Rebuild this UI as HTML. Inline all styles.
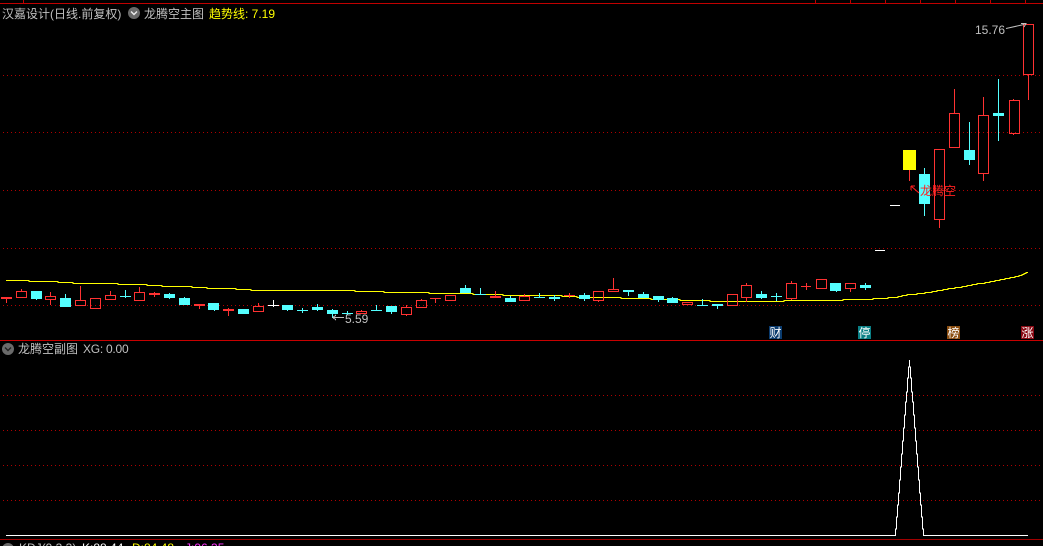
<!DOCTYPE html>
<html><head><meta charset="utf-8"><style>
html,body{margin:0;padding:0;background:#000;width:1043px;height:546px;overflow:hidden}
#w{position:relative;width:1043px;height:546px;overflow:hidden;background:#000}
svg{display:block;position:absolute;left:0;top:0}
.t{position:absolute;white-space:nowrap;font-family:"WenQuanYi Zen Hei","Liberation Sans","Noto Sans CJK SC",sans-serif;font-size:12px;line-height:14px;height:14px;color:#c0c0c0}
</style></head><body><div id="w">
<svg width="1043" height="546" viewBox="0 0 1043 546">
<defs>
<pattern id="d" x="3" y="0" width="4" height="1" patternUnits="userSpaceOnUse"><rect width="1" height="1" fill="#b00000"/></pattern>
</defs>
<g shape-rendering="crispEdges">
<path d="M0 3.5H1043M23.5 0V3M815.5 0V3M850.5 0V3M885.5 0V3M920.5 0V3M955.5 0V3M990.5 0V3M1025.5 0V3" stroke="#c00000" fill="none"/>
<path d="M0 340.5H1043" stroke="#c80000"/>
<path d="M0 539.5H1043" stroke="#a00000"/>
<g fill="url(#d)">
<rect x="3" y="75" width="1040" height="1"/><rect x="3" y="132" width="1040" height="1"/><rect x="3" y="190" width="1040" height="1"/><rect x="3" y="248" width="1040" height="1"/><rect x="3" y="305" width="1040" height="1"/>
<rect x="0" y="395" width="1043" height="1"/><rect x="0" y="430" width="1043" height="1"/><rect x="0" y="465" width="1043" height="1"/><rect x="0" y="500" width="1043" height="1"/>
</g>

<!-- yellow MA -->
<path d="M6 280.5H29V281.5H58V282.5H73V283.5H118V284.5H147V285.5H162V286.5H192V287.5H207V288.5H236V289.5H251V290.5H355V291.5H384V292.5H429V293.5H473V294.5H503V295.5H562V296.5H577V297.5H621V298.5H651V299.5H680V300.5H710V301.5H784V300.5H843V299.5H873V298.5H888V297.5H898V296.5H902V295.5H907V294.5H917V293.5H925V292.5H932V291.5H937V290.5H943V289.5H948V288.5H955V287.5H962V286.5H967V285.5H972V284.5H977V283.5H985V282.5H990V281.5H995V280.5H1000V279.5H1005V278.5H1010V277.5H1015V276.5H1019V275.5H1022V274.5H1024V273.5H1026V272.5H1028" stroke="#ffff00" fill="none"/>

<!-- red boxes -->
<g fill="none" stroke="#ff3232">
<rect x="16.5" y="291.5" width="10" height="6"/><rect x="45.5" y="296.5" width="10" height="3"/><rect x="75.5" y="300.5" width="10" height="5"/><rect x="90.5" y="298.5" width="10" height="10"/><rect x="105.5" y="295.5" width="10" height="4"/><rect x="134.5" y="292.5" width="10" height="8"/><rect x="253.5" y="306.5" width="10" height="5"/><rect x="356.5" y="311.5" width="10" height="2"/><rect x="401.5" y="307.5" width="10" height="7"/><rect x="416.5" y="300.5" width="10" height="7"/><rect x="445.5" y="295.5" width="10" height="5"/><rect x="519.5" y="296.5" width="10" height="4"/><rect x="593.5" y="291.5" width="10" height="9"/><rect x="608.5" y="289.5" width="10" height="2"/><rect x="682.5" y="302.5" width="10" height="2"/><rect x="727.5" y="294.5" width="10" height="11"/><rect x="741.5" y="285.5" width="10" height="12"/><rect x="786.5" y="283.5" width="10" height="15"/><rect x="816.5" y="279.5" width="10" height="9"/><rect x="845.5" y="283.5" width="10" height="5"/><rect x="934.5" y="149.5" width="10" height="70"/><rect x="949.5" y="113.5" width="10" height="34"/><rect x="978.5" y="115.5" width="10" height="58"/><rect x="1009.5" y="100.5" width="10" height="33"/><rect x="1023.5" y="24.5" width="10" height="50"/>
<path d="M6.5 299V303M21.5 289V291M50.5 292V296M50.5 300V305M80.5 286V300M95.5 308V309M110.5 291V295M139.5 287V292M154.5 292V297M199.5 305V309M228.5 308V316M258.5 303V306M361.5 310V311M406.5 305V307M406.5 315V316M421.5 299V300M435.5 298V303M495.5 291V298M598.5 300V302M613.5 278V289M524.5 294V296M569.5 293V298M732.5 305V306M746.5 283V285M746.5 297V302M791.5 281V283M791.5 298V300M806.5 283V290M821.5 288V289M850.5 288V292M909.5 170V181M939.5 219V228M954.5 89V113M954.5 147V148M983.5 97V115M983.5 173V181M1013.5 99V100M1013.5 133V135M1028.5 74V100M430 298.5H441M801 286.5H811"/>
</g>
<g fill="#ff3232">
<rect x="1" y="297" width="11" height="2"/><rect x="149" y="293" width="11" height="2"/><rect x="194" y="304" width="11" height="2"/><rect x="223" y="309" width="11" height="2"/><rect x="490" y="296" width="11" height="2"/><rect x="564" y="295" width="11" height="1"/>
</g>
<!-- cyan -->
<g fill="#54ffff">
<rect x="31" y="291" width="11" height="8"/><rect x="60" y="298" width="11" height="9"/><rect x="164" y="294" width="11" height="4"/><rect x="179" y="298" width="11" height="7"/><rect x="208" y="303" width="11" height="7"/><rect x="238" y="309" width="11" height="5"/><rect x="282" y="305" width="11" height="5"/><rect x="312" y="307" width="11" height="3"/><rect x="327" y="310" width="11" height="4"/><rect x="386" y="306" width="11" height="6"/><rect x="460" y="288" width="11" height="5"/><rect x="505" y="298" width="11" height="4"/><rect x="549" y="297" width="11" height="2"/><rect x="579" y="295" width="11" height="4"/><rect x="623" y="290" width="11" height="2"/><rect x="638" y="294" width="11" height="4"/><rect x="653" y="296" width="11" height="4"/><rect x="667" y="298" width="11" height="5"/><rect x="712" y="304" width="11" height="2"/><rect x="756" y="294" width="11" height="4"/><rect x="830" y="283" width="11" height="8"/><rect x="860" y="285" width="11" height="3"/><rect x="919" y="174" width="11" height="30"/><rect x="964" y="150" width="11" height="10"/><rect x="993" y="113" width="11" height="3"/>
</g>
<path fill="none" stroke="#54ffff" d="M36.5 299V300M65.5 294V298M125.5 290V298M120 296.5H131M169.5 293V299M184.5 297V298M214.5 310V311M287.5 310V311M302.5 308V313M297 310.5H308M317.5 304V311M332.5 309V318M347.5 311V315M342 313.5H353M376.5 305V311M371 310.5H382M391.5 312V314M465.5 285V288M480.5 288V294M475 294.5H486M510.5 296V298M539.5 293V298M534 297.5H545M554.5 295V301M584.5 293V301M628.5 292V296M643.5 292V294M658.5 300V302M672.5 297V298M702.5 299V305M697 305.5H708M717.5 306V309M761.5 291V299M776.5 293V301M771 296.5H782M836.5 291V292M865.5 283V290M924.5 168V174M924.5 204V216M969.5 122V150M969.5 160V165M998.5 79V141"/>
<!-- white -->
<path fill="none" stroke="#fff" d="M273.5 300V307M268 305.5H279M875 250.5H885M890 205.5H900"/>
<rect x="903" y="150" width="13" height="20" fill="#ffff00"/>
<!-- sub indicator line -->
<path fill="none" stroke="#fff" d="M6 535.5H895.5V529H896.5V517H897.5V505H898.5V493H899.5V480H900.5V467H901.5V454H902.5V441H903.5V428H904.5V415H905.5V402H906.5V392H907.5V378H908.5V367H909.5V360M909.5 367H910.5V378H911.5V392H912.5V402H913.5V415H914.5V428H915.5V441H916.5V454H917.5V467H918.5V480H919.5V493H920.5V505H921.5V517H922.5V529H923.5V535.5H1028"/>
<!-- badges -->
<rect x="769" y="326" width="13" height="13" fill="#0a3b6e"/>
<rect x="858" y="326" width="13" height="13" fill="#0a7f85"/>
<rect x="947" y="326" width="13" height="13" fill="#8a4d10"/>
<rect x="1021" y="326" width="13" height="13" fill="#8a0a14"/>
</g>
<!-- label arrows -->
<path d="M344 317.5H333M336 315L333 317.5L336 320" stroke="#c0c0c0" fill="none" shape-rendering="crispEdges"/>
<path d="M1006 28.5L1024 24.5M1021 23.5H1026L1024 27" stroke="#c0c0c0" fill="none"/>
<path d="M919 193L911 186M911 186V190M911 186H915" stroke="#ff2020" fill="none"/>
<!-- icons -->
<circle cx="134" cy="13" r="6" fill="#6a6a6a"/><path d="M131 11.5L134 14.5L137 11.5" stroke="#eee" stroke-width="1.4" fill="none"/>
<circle cx="8" cy="349" r="6" fill="#6a6a6a"/><path d="M5 347.5L8 350.5L11 347.5" stroke="#222" stroke-width="1.4" fill="none"/>
<circle cx="8" cy="549" r="6" fill="#6a6a6a"/>
</svg>
<div class="t" style="left:2px;top:7px">汉嘉设计(日线.前复权)</div>
<div class="t" style="left:144px;top:7px">龙腾空主图</div>
<div class="t" style="left:209px;top:7px;color:#ffff00">趋势线: 7.19</div>
<div class="t" style="left:18px;top:342px">龙腾空副图</div>
<div class="t" style="left:83px;top:342px;letter-spacing:-0.25px">XG: 0.00</div>
<div class="t" style="left:975px;top:23px">15.76</div>
<div class="t" style="left:345px;top:312px">5.59</div>
<div class="t" style="left:920px;top:184px;color:#ff2020">龙腾空</div>
<div class="t" style="left:769.5px;top:326px;color:#fff">财</div>
<div class="t" style="left:858.5px;top:326px;color:#fff">停</div>
<div class="t" style="left:947.5px;top:326px;color:#fff">榜</div>
<div class="t" style="left:1021.5px;top:326px;color:#fff">涨</div>
<div class="t" style="left:19px;top:541px">KDJ(9,3,3)</div>
<div class="t" style="left:82px;top:541px;color:#fff">K:88.44</div>
<div class="t" style="left:132px;top:541px;color:#ffff00">D:84.48</div>
<div class="t" style="left:185px;top:541px;color:#ff32ff">J:96.35</div>
</div></body></html>
